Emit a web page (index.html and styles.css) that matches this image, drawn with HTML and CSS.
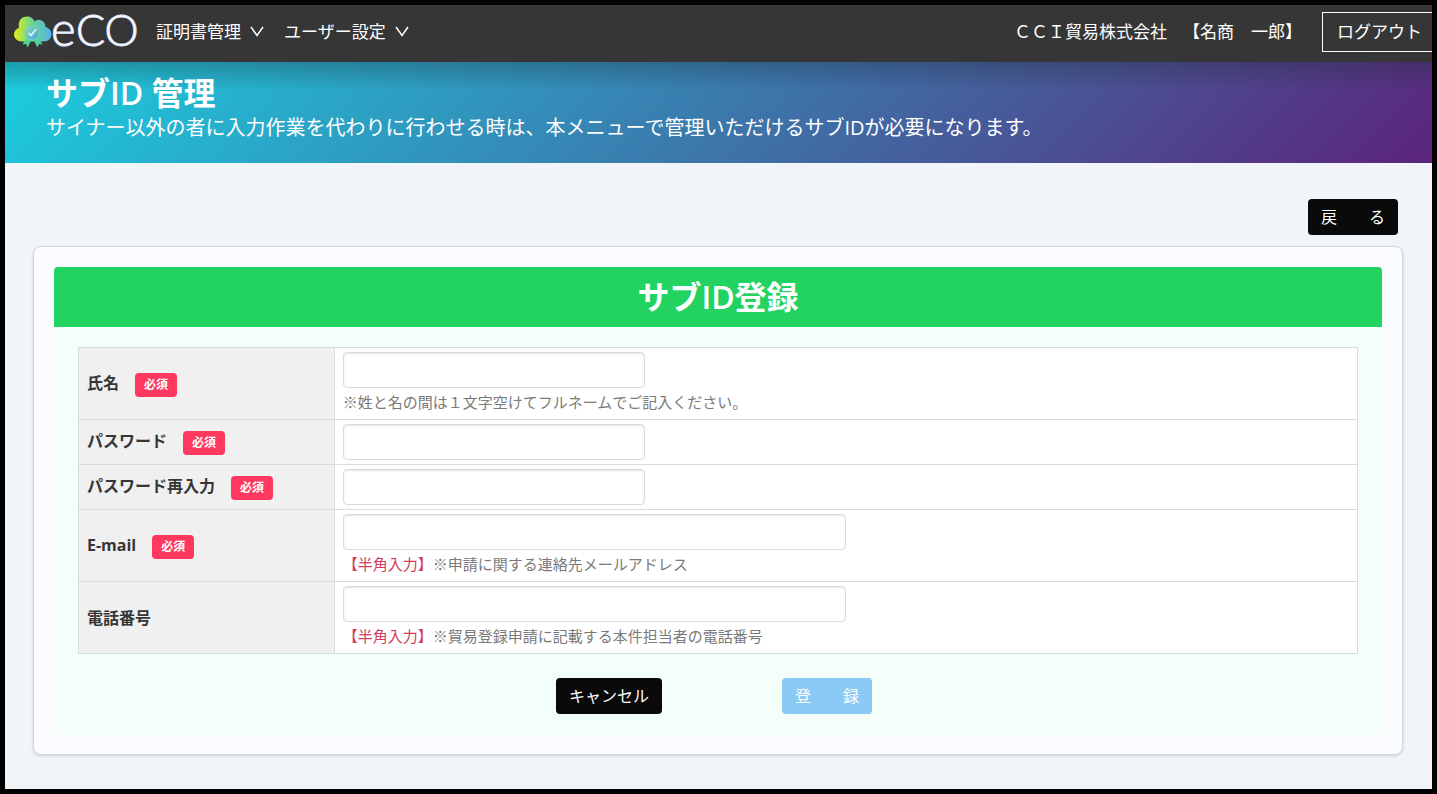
FILE: index.html
```html
<!DOCTYPE html>
<html lang="ja">
<head>
<meta charset="utf-8">
<meta name="viewport" content="width=device-width, initial-scale=1">
<title>サブID 管理</title>
<link rel="stylesheet" href="styles.css">
</head>
<body>
<header class="navbar">
  <a class="brand" href="#" aria-label="eCO">
    <svg class="brand-logo" width="128" height="36" viewBox="0 0 128 36">
      <defs>
        <linearGradient id="cloud" x1="0" y1="0" x2="1" y2="0">
          <stop offset="0" stop-color="#e2ee17"/>
          <stop offset="0.45" stop-color="#6fd886"/>
          <stop offset="1" stop-color="#4fb2ec"/>
        </linearGradient>
        <linearGradient id="seal" x1="0" y1="0" x2="1" y2="1">
          <stop offset="0" stop-color="#8bd8a8"/>
          <stop offset="1" stop-color="#45a7e0"/>
        </linearGradient>
      </defs>
      <path fill="url(#cloud)" d="M9 27.500C4.500 27.500 1 24.500 1 20.500C1 17.200 3.200 14.800 6 13.800C4.500 7 8.500 2.500 14 2.500C18 2.500 20.500 4.500 21.500 7.500C26 3.500 32.500 7 32.500 13C36.500 14 38.500 17 38.500 20.500C38.500 24.500 35 27.500 31.500 27.500Z"/>
      <path fill="#4fd49a" d="M14 23L9.500 30.500L13 30L14.500 33.500L19 25ZM20 25L24.500 33.500L26 30L29.500 30.500L25 23Z"/>
      <circle cx="19" cy="19" r="7" fill="url(#seal)" stroke="#7fd0cf"/>
      <path d="M15.500 19L18 21.500L23 15.500" fill="none" stroke="#eaffff" stroke-width="1.500"/>
      <text class="brand-text" x="38" y="32" font-size="47">e</text>
      <text class="brand-text" x="63" y="32" font-size="43">CO</text>
    </svg>
  </a>
  <nav class="menu">
    <button class="menu-item" type="button">証明書管理
      <svg width="14" height="11" viewBox="0 0 14 11"><path d="M1 1L7 9.500L13 1"/></svg>
    </button>
    <button class="menu-item" type="button">ユーザー設定
      <svg width="14" height="11" viewBox="0 0 14 11"><path d="M1 1L7 9.500L13 1"/></svg>
    </button>
  </nav>
  <div class="account">
    <span>ＣＣＩ貿易株式会社</span>
    <span>【名商　一郎】</span>
    <button class="logout" type="button">ログアウト</button>
  </div>
</header>

<section class="hero">
  <h1>サブID 管理</h1>
  <p>サイナー以外の者に入力作業を代わりに行わせる時は、本メニューで管理いただけるサブIDが必要になります。</p>
</section>

<main class="content">
  <div class="toolbar">
    <button class="button" type="button">戻　　る</button>
  </div>
  <section class="card">
    <h2>サブID登録</h2>
    <form class="panel">
      <table class="form-table">
        <tr>
          <th scope="row"><label for="name">氏名</label><span class="tag">必須</span></th>
          <td><input class="short" id="name" type="text"><p class="help">※姓と名の間は１文字空けてフルネームでご記入ください。</p></td>
        </tr>
        <tr>
          <th scope="row"><label for="pass">パスワード</label><span class="tag">必須</span></th>
          <td><input class="short" id="pass" type="password"></td>
        </tr>
        <tr>
          <th scope="row"><label for="pass2">パスワード再入力</label><span class="tag">必須</span></th>
          <td><input class="short" id="pass2" type="password"></td>
        </tr>
        <tr>
          <th scope="row"><label for="email">E-mail</label><span class="tag">必須</span></th>
          <td><input class="long" id="email" type="email"><p class="help"><span class="note">【半角入力】</span>※申請に関する連絡先メールアドレス</p></td>
        </tr>
        <tr>
          <th scope="row"><label for="tel">電話番号</label></th>
          <td><input class="long" id="tel" type="tel"><p class="help"><span class="note">【半角入力】</span>※貿易登録申請に記載する本件担当者の電話番号</p></td>
        </tr>
      </table>
      <div class="actions">
        <button class="button" type="button">キャンセル</button>
        <button class="button primary" type="submit" disabled>登　　録</button>
      </div>
    </form>
  </section>
</main>
</body>
</html>
```
FILE: styles.css
```css
*, *::before, *::after { box-sizing: border-box; }

body {
  margin: 0;
  min-height: 100vh;
  border: 5px solid #000;
  background: #f1f5fa;
  color: #363636;
  font-family: "Open Sans", "Noto Sans CJK JP", sans-serif;
  font-size: 16px;
  line-height: 24px;
}

h1, h2, p { margin: 0; }

button, input { font: inherit; }

.navbar {
  display: flex;
  align-items: center;
  height: 57px;
  padding-left: 8px;
  padding-bottom: 4px;
  background: #363636;
  color: #fff;
  font-size: 17px;
  white-space: nowrap;
}

.brand { display: flex; }

.brand-logo { overflow: visible; }

.brand-text {
  font-family: Lato, sans-serif;
  font-weight: 300;
  fill: #fff;
  stroke: #e4eaff;
  stroke-width: 1px;
}

.menu {
  display: flex;
  gap: 20px;
  margin-left: 15px;
}

.menu-item {
  display: flex;
  align-items: center;
  gap: 9px;
  padding: 0;
  border: 0;
  background: none;
  color: inherit;
}

.menu-item path {
  fill: none;
  stroke: #fff;
  stroke-width: 1.5;
}

.account {
  display: flex;
  align-items: center;
  gap: 16px;
  margin-left: auto;
}

.logout {
  height: 40px;
  margin-left: 4px;
  padding: 0 10px 0 14px;
  border: 1px solid #fff;
  border-right: 0;
  background: none;
  color: inherit;
}

.hero {
  padding: 10px 41px 22px;
  background:
    linear-gradient(rgba(30, 40, 50, 0.3), rgba(30, 40, 50, 0) 28px),
    linear-gradient(135deg, #1bcedf, #5b247a);
  color: #fff;
}

.hero h1 {
  font-size: 32px;
  font-weight: 600;
  line-height: 42px;
}

.hero p {
  font-size: 20px;
  line-height: 27px;
}

.content { padding: 36px 29px 32px 28px; }

.toolbar {
  display: flex;
  justify-content: flex-end;
  padding-right: 5px;
  margin-bottom: 11px;
}

.button {
  height: 36px;
  padding: 0 13px;
  border: 0;
  border-radius: 4px;
  background: #0a0a0a;
  color: #fff;
}

.button.primary { background: #8bcaf4; }

.card {
  padding: 20px;
  border: 1px solid #d3d8de;
  border-radius: 8px;
  background: #fbfcff;
  box-shadow: 0 1px 3px rgba(0, 0, 0, 0.15);
}

.card h2 {
  border-radius: 4px 4px 0 0;
  background: #23d361;
  color: #fff;
  font-size: 32px;
  font-weight: 600;
  line-height: 60px;
  text-align: center;
}

.panel {
  padding: 20px 24px;
  border-radius: 0 0 4px 4px;
  background: #f5fff9;
}

.form-table {
  width: 100%;
  border-collapse: collapse;
  table-layout: fixed;
  background: #fff;
}

.form-table th, .form-table td {
  padding: 4px 8px;
  border: 1px solid #dbdbdb;
  text-align: left;
  vertical-align: middle;
}

.form-table th {
  width: 20%;
  background: #f0f0f0;
  font-weight: 700;
}

.tag {
  display: inline-block;
  margin-left: 16px;
  padding: 0 9px;
  border-radius: 4px;
  background: #ff3860;
  color: #fff;
  font-size: 12px;
  line-height: 24px;
}

.form-table input {
  display: block;
  height: 36px;
  padding: 0 11px;
  border: 1px solid #dbdbdb;
  border-radius: 4px;
  background: #fff;
  box-shadow: inset 0 1px 2px rgba(10, 10, 10, 0.1);
}

.form-table .short { width: 30%; }

.form-table .long { width: 50%; }

.help {
  padding-top: 1px;
  color: #7a7a7a;
  font-size: 15px;
  line-height: 26px;
}

.note { color: #d23c5c; }

.actions {
  display: flex;
  justify-content: center;
  gap: 120px;
  margin-top: 24px;
  padding-right: 8px;
}
```
